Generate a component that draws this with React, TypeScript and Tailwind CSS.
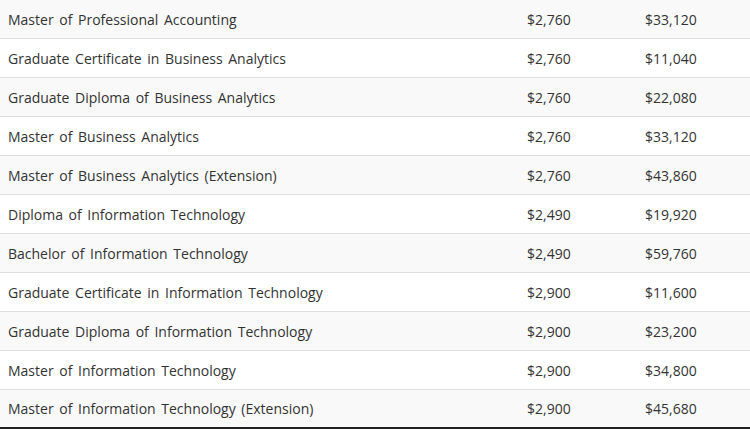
const rows: [string, string, string][] = [
  ["Master of Professional Accounting", "$2,760", "$33,120"],
  ["Graduate Certificate in Business Analytics", "$2,760", "$11,040"],
  ["Graduate Diploma of Business Analytics", "$2,760", "$22,080"],
  ["Master of Business Analytics", "$2,760", "$33,120"],
  ["Master of Business Analytics (Extension)", "$2,760", "$43,860"],
  ["Diploma of Information Technology", "$2,490", "$19,920"],
  ["Bachelor of Information Technology", "$2,490", "$59,760"],
  ["Graduate Certificate in Information Technology", "$2,900", "$11,600"],
  ["Graduate Diploma of Information Technology", "$2,900", "$23,200"],
  ["Master of Information Technology", "$2,900", "$34,800"],
  ["Master of Information Technology (Extension)", "$2,900", "$45,680"],
];

export default function App() {
  return (
    <div className="w-[750px] bg-white font-['Open_Sans',sans-serif] text-[14px] text-[#333]">
      {rows.map(([course, unit, total], i) => {
        const last = i === rows.length - 1;
        return (
          <div
            key={course}
            className={`grid grid-cols-[519px_118px_1fr] items-center ${
              i % 2 === 0 ? "bg-[#f9f9f9]" : "bg-white"
            } ${last ? "h-[39px] border-b-2 border-[#222]" : "h-[39px] border-b border-[#ddd]"}`}
          >
            <div className="px-2 [word-spacing:2px]">{course}</div>
            <div className="px-2">{unit}</div>
            <div className="px-2">{total}</div>
          </div>
        );
      })}
    </div>
  );
}
